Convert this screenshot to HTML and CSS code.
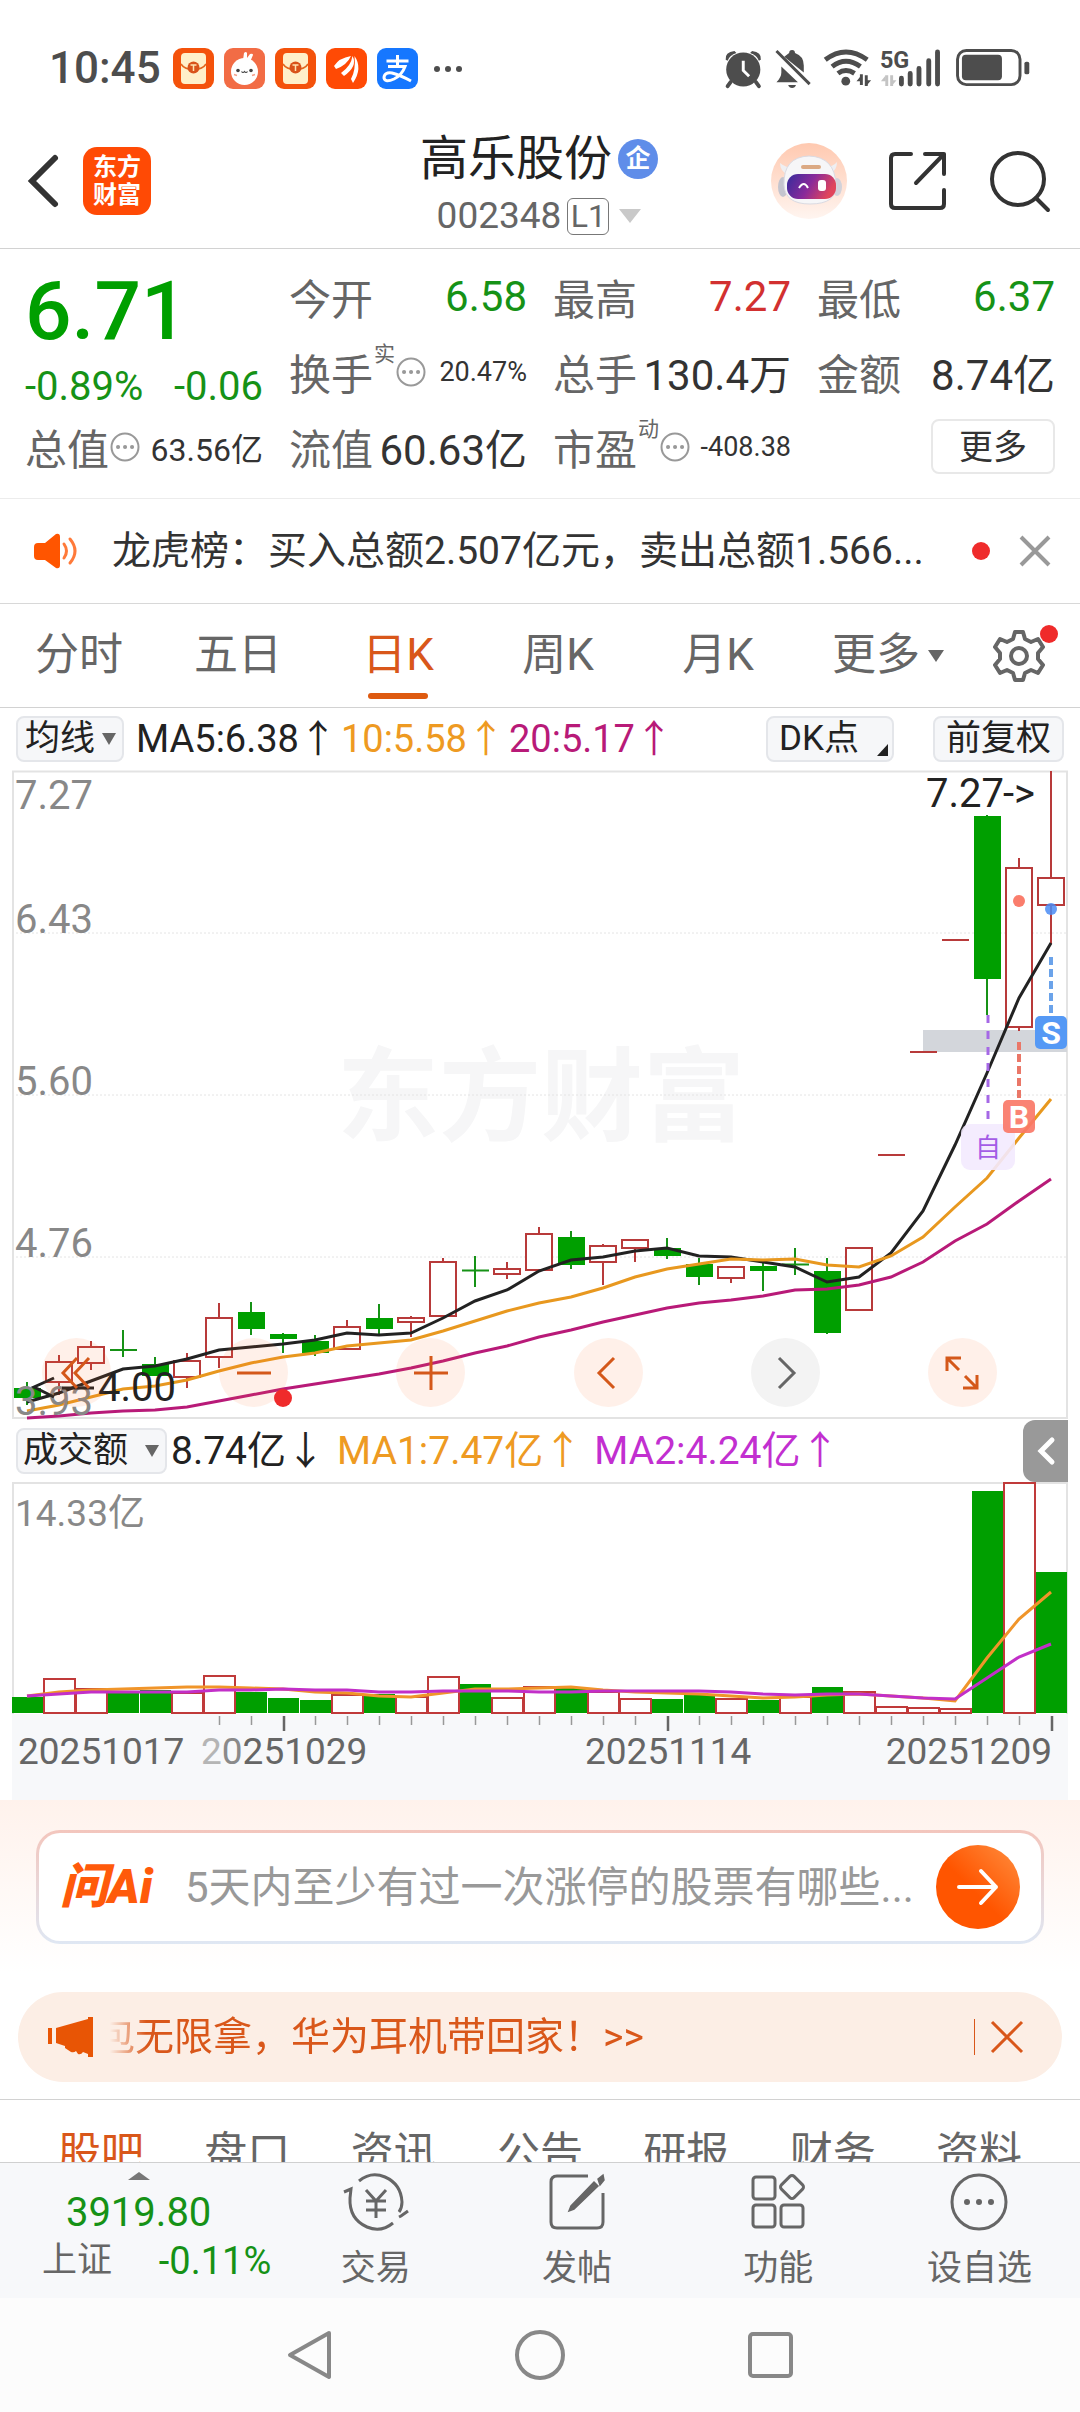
FILE: index.html
```html
<!DOCTYPE html>
<html lang="zh-CN">
<head>
<meta charset="utf-8">
<meta name="viewport" content="width=device-width, initial-scale=1">
<title>高乐股份 002348</title>
<link rel="stylesheet" href="styles.css">
</head>
<body>
<div class="status">
  <span class="clock">10:45</span>
  <div class="status-apps">
    <svg class="app" viewBox="0 0 41 41"><rect width="41" height="41" rx="9" fill="#f4520b"/><rect x="8" y="5" width="25" height="31" rx="4" fill="#fff0c9"/><path d="M8 16Q11 21 20.500 22Q30 21 33 16" fill="none" stroke="#e2661c" stroke-width="1.500"/><circle cx="20.500" cy="19.500" r="6" fill="#d9531a"/><path d="M17.500 17h6M20.500 17v6" stroke="#ffe3b0" stroke-width="1.500"/></svg>
    <svg class="app" viewBox="0 0 41 41"><rect width="41" height="41" rx="9" fill="#f26c45"/><path d="M19 12l1-7q2-2 3 0v5l3-4q3-1 3 1l-3 7z" fill="#fff"/><ellipse cx="20.500" cy="23.500" rx="13.500" ry="13.500" fill="#fff"/><circle cx="14" cy="22.500" r="1.800" fill="#444"/><circle cx="27" cy="22.500" r="1.800" fill="#444"/><path d="M17.500 23.500q1.500 2 3 0q1.500 2 3 0" fill="none" stroke="#444" stroke-width="1.200"/><path d="M10 26.500l3 1M28 27.500l3-1" stroke="#f5a08a" stroke-width="1.500"/></svg>
    <svg class="app" viewBox="0 0 41 41"><rect width="41" height="41" rx="9" fill="#f4520b"/><rect x="8" y="5" width="25" height="31" rx="4" fill="#fff0c9"/><path d="M8 16Q11 21 20.500 22Q30 21 33 16" fill="none" stroke="#e2661c" stroke-width="1.500"/><circle cx="20.500" cy="19.500" r="6" fill="#d9531a"/><path d="M17.500 17h6M20.500 17v6" stroke="#ffe3b0" stroke-width="1.500"/></svg>
    <svg class="app" viewBox="0 0 41 41"><rect width="41" height="41" rx="9" fill="#ff4a05"/><path d="M8 18Q13 10 25 8Q21 17 10 21ZM15 25Q25 18 26.500 8Q32 18 18 28ZM25 31Q30 22 28.500 8Q37 20 27 35Z" fill="#fff"/></svg>
    <svg class="app" viewBox="0 0 41 41"><rect width="41" height="41" rx="9" fill="#1677ff"/><path d="M9.500 13h22M20.500 7v11M11 18.500h17Q25 27 17 31Q8 35 7 30Q7 24 15 25Q23 27 34 33" fill="none" stroke="#fff" stroke-width="3"/></svg>
  </div>
  <svg class="more-dots" viewBox="0 0 30 8" fill="#4d4d4d"><circle cx="4" cy="4" r="3"/><circle cx="15" cy="4" r="3"/><circle cx="26" cy="4" r="3"/></svg>
  <svg class="status-icons" viewBox="0 0 314 42" fill="#4d4d4d">
    <circle cx="20" cy="22" r="17.500"/><path d="M2 12Q1 4 11 3L13 5Q6 7 4 13ZM38 12Q39 4 29 3L27 5Q34 7 36 13Z"/><path d="M7 35l-3 4M33 35l3 4" stroke="#4d4d4d" stroke-width="4" stroke-linecap="round"/><path d="M20 13v10l6 6" fill="none" stroke="#fff" stroke-width="3"/>
    <path d="M54 35q5-5 5-10v-6L76 35ZM62 9l5-4q0-3 3-3t3 3q9 3 9 13v7Z"/><path d="M66 38h8q-1 3-4 3t-4-3Z"/><path d="M54 3L88 37" stroke="#4d4d4d" stroke-width="3"/>
    <g fill="none" stroke="#4d4d4d" stroke-width="5"><path d="M104 12Q125-4 147 12"/><path d="M111 19Q125 8 140 19"/><path d="M117 26Q125 20 134 26"/></g><circle cx="125" cy="34" r="4.500"/><path d="M141 27v11M146 28v11" stroke="#4d4d4d" stroke-width="3"/><path d="M136 34l5-6v6ZM151 33l-5 6v-6Z"/>
    <text x="160" y="20" class="status-5g">5G</text>
    <path d="M167 28v11M172 28v11" stroke="#c4c4c4" stroke-width="3"/><path d="M161 34l5-6v6ZM177 33l-5 6v-6Z" fill="#c4c4c4"/>
    <path d="M182 31v6M191 26v11M200 21v16M210 13v24M219 4v33" stroke="#4d4d4d" stroke-width="5" stroke-linecap="round"/>
    <rect x="239.500" y="2.500" width="64" height="35" rx="9" fill="none" stroke="#4d4d4d" stroke-width="3"/><rect x="244" y="7" width="41" height="26" rx="4"/><rect x="308" y="14" width="5" height="13" rx="2"/>
  </svg>
</div>

<header class="topbar">
  <div class="topbar-left">
    <button class="icon-btn" aria-label="返回"><svg width="32" height="54" viewBox="0 0 32 54" fill="none" stroke="#333" stroke-width="6" stroke-linecap="round"><path d="M28 4L5 27L28 50"/></svg></button>
    <a class="brand" href="#home">东方<br>财富</a>
  </div>
  <div class="title-block">
    <div class="title-row"><h1 class="stock-name">高乐股份</h1><span class="badge">企</span></div>
    <div class="code-row"><span>002348</span><span class="level">L1</span><svg width="22" height="14" viewBox="0 0 22 14"><path d="M0 0H22L11 14Z" fill="#c9c9c9"/></svg></div>
  </div>
  <div class="topbar-right">
    <button class="icon-btn" aria-label="智能助手"><svg width="76" height="76" viewBox="0 0 76 76">
      <defs><linearGradient id="face" x1="0" x2="1" y1="0" y2=".3"><stop offset="0" stop-color="#352c9c"/><stop offset=".55" stop-color="#8a2a9a"/><stop offset="1" stop-color="#e0455c"/></linearGradient><linearGradient id="halo" x1="0" x2="0" y1="0" y2="1"><stop offset="0" stop-color="#ffc9b0"/><stop offset="1" stop-color="#fff5f0"/></linearGradient></defs>
      <circle cx="38" cy="38" r="38" fill="url(#halo)"/><path d="M9 20q0 8 8 12l6-7q-8 0-14-5ZM66 19q0 8-7 12l-5-7q8 0 12-5Z" fill="#efeff2"/><ellipse cx="12" cy="44" rx="5" ry="10" fill="#c4c4ce"/><ellipse cx="66" cy="44" rx="5" ry="9" fill="#d2d2da"/><path d="M13 42Q12 14 38 13Q64 14 65 42Q66 61 39 61Q14 61 13 42Z" fill="#f6f6f8" stroke="#dadae2"/><rect x="16" y="31" width="49" height="25" rx="11" fill="url(#face)"/><rect x="30" y="22" width="20" height="4" rx="2" fill="#dba984"/><path d="M28 45q5-8 9 0" fill="none" stroke="#fff" stroke-width="2"/><rect x="47" y="37" width="8" height="11" rx="3" fill="#fff"/></svg></button>
    <button class="icon-btn" aria-label="分享"><svg width="60" height="60" viewBox="0 0 60 60" fill="none" stroke="#333" stroke-width="4" stroke-linecap="round" stroke-linejoin="round"><path d="M23 3H7Q3 3 3 7V53Q3 57 7 57H52Q56 57 56 53V39M37 3H56V23M56 3L28 32"/></svg></button>
    <button class="icon-btn" aria-label="搜索"><svg width="62" height="62" viewBox="0 0 62 62" fill="none" stroke="#333" stroke-width="4" stroke-linecap="round"><circle cx="29" cy="29" r="26"/><path d="M47 48L59 60"/></svg></button>
  </div>
</header>

<main>
<section class="quote">
  <div class="price-cell">
    <div class="price">6.71</div>
    <div class="change"><span>-0.89%</span><span>-0.06</span></div>
  </div>
  <div class="cell"><span class="label">今开</span><span class="value down">6.58</span></div>
  <div class="cell"><span class="label">最高</span><span class="value up">7.27</span></div>
  <div class="cell"><span class="label">最低</span><span class="value down">6.37</span></div>
  <div class="cell"><span class="label">换手</span><span class="note">实</span><svg class="info" viewBox="0 0 30 30"><circle cx="15" cy="15" r="13.500"/><path d="M8 15h.1M15 15h.1M22 15h.1"/></svg><span class="value small">20.47%</span></div>
  <div class="cell"><span class="label">总手</span><span class="value">130.4万</span></div>
  <div class="cell"><span class="label">金额</span><span class="value">8.74亿</span></div>
  <div class="cell"><span class="label">总值</span><svg class="info" viewBox="0 0 30 30"><circle cx="15" cy="15" r="13.500"/><path d="M8 15h.1M15 15h.1M22 15h.1"/></svg><span class="value medium">63.56亿</span></div>
  <div class="cell"><span class="label">流值</span><span class="value">60.63亿</span></div>
  <div class="cell"><span class="label">市盈</span><span class="note">动</span><svg class="info" viewBox="0 0 30 30"><circle cx="15" cy="15" r="13.500"/><path d="M8 15h.1M15 15h.1M22 15h.1"/></svg><span class="value small">-408.38</span></div>
  <div class="cell"><button class="more-btn">更多</button></div>
</section>

<section class="news">
  <svg class="speaker" width="44" height="36" viewBox="0 0 44 36"><path d="M4 10H11L22 1Q26 0 26 4V32Q26 36 22 35L11 27H4Q0 27 0 23V14Q0 10 4 10Z" fill="#ff5500"/><path d="M30 11Q35 18 30 25M36 6Q46 18 36 30" fill="none" stroke="#ff7a3a" stroke-width="3" stroke-linecap="round"/></svg>
  <a class="news-text" href="#lhb">龙虎榜：买入总额2.507亿元，卖出总额1.566...</a>
  <span class="red-dot"></span>
  <button class="icon-btn" aria-label="关闭"><svg width="30" height="30" viewBox="0 0 30 30" stroke="#999" stroke-width="4"><path d="M1 1L29 29M29 1L1 29"/></svg></button>
</section>

<nav class="periods">
  <button class="period">分时</button>
  <button class="period">五日</button>
  <button class="period active">日K</button>
  <button class="period">周K</button>
  <button class="period">月K</button>
  <button class="period">更多<svg width="16" height="12" viewBox="0 0 16 12"><path d="M0 0H16L8 12Z" fill="#666"/></svg></button>
  <button class="period gear" aria-label="设置"><svg width="54" height="54" viewBox="0 0 54 54" fill="none" stroke="#666" stroke-width="4" stroke-linejoin="round"><path d="M23 3H31L33 10L39 13L46 10L51 18L46 24V30L51 36L46 44L39 41L33 44L31 51H23L21 44L15 41L8 44L3 36L8 30V24L3 18L8 10L15 13L21 10Z"/><circle cx="27" cy="27" r="8"/></svg><span class="red-dot"></span></button>
</nav>

<section class="indicator">
  <span class="drop"><select class="chip" aria-label="主图指标"><option>均线</option></select></span>
  <span class="ma black">MA5:6.38↑</span>
  <span class="ma orange">10:5.58↑</span>
  <span class="ma magenta">20:5.17↑</span>
  <button class="chip dk">DK点<svg width="11" height="12" viewBox="0 0 11 12"><path d="M11 0V12H0Z" fill="#222"/></svg></button>
  <button class="chip">前复权</button>
</section>

<section class="chart">
  <svg class="plot" viewBox="12 770 1056 650" role="img" aria-label="日K线图">
    <text class="watermark" x="541" y="1133" text-anchor="middle">东方财富</text>
    <path d="M12 933H1067M12 1095H1067M12 1257H1067" stroke="#e4e4e4" stroke-width="1" stroke-dasharray="2 2"/>
    <path d="M13 771.500H1067V1418H13Z" fill="none" stroke="#e3e3e3" stroke-width="2"/>
    <rect x="923" y="1030" width="144" height="22" fill="#d3d6db"/>
    <g class="rise">
      <path d="M59 1355V1395M91 1341V1370M187 1353V1388M219 1303V1368M347 1320V1349M411 1316V1337M443 1258V1316M507 1262V1279M539 1227V1270M603 1244V1285M635 1240V1262M731 1267V1283M859 1248V1310M1019 858V1031M1051 771V944"/>
      <path fill="#fff" d="M46 1362h26v20h-26ZM78 1347h26v16h-26ZM174 1361h26v16h-26ZM206 1318h26v39h-26ZM334 1327h26v22h-26ZM398 1318h26v4h-26ZM430 1262h26v54h-26ZM494 1269h26v5h-26ZM526 1234h26v36h-26ZM590 1246h26v16h-26ZM622 1240h26v8h-26ZM718 1267h26v11h-26ZM846 1248h26v62h-26ZM1006 868h26v159h-26ZM1038 878h26v27h-26Z"/>
      <path d="M878 1155h27M910 1052h27M942 940h27"/>
    </g>
    <g class="fall">
      <path d="M27 1382V1405M123 1330V1357M110 1350h27M155 1357V1376M251 1302V1335M283 1333V1353M315 1335V1356M379 1304V1334M475 1256V1287M462 1270.500h27M571 1231V1269M667 1238V1259M699 1258V1285M763 1260V1291M795 1248V1275M782 1264.500h27M827 1258V1334M987 815V1015"/>
      <path class="fall-body" d="M14 1388h27v10h-27ZM142 1364h27v12h-27ZM238 1312h27v17h-27ZM270 1334h27v5h-27ZM302 1341h27v12h-27ZM366 1318h27v11h-27ZM558 1237h27v28h-27ZM654 1248h27v8h-27ZM686 1264h27v13h-27ZM750 1266h27v5h-27ZM814 1271h27v62h-27ZM974 816h27v163h-27Z"/>
    </g>
    <g fill="none" stroke-width="3">
      <polyline stroke="#222" points="27,1402 59,1393 91,1381 123,1369 155,1366 187,1359 219,1350 251,1347 283,1344 315,1340 347,1333 379,1335 411,1333 443,1318 475,1301 507,1290 539,1271 571,1260 603,1257 635,1251 667,1248 699,1256 731,1257 763,1262 795,1267 827,1282 859,1277 891,1253 923,1211 955,1145 987,1073 1019,998 1051,943"/>
      <polyline stroke="#e8981f" points="27,1411 59,1405 91,1397 123,1389 155,1386 187,1380 219,1371 251,1363 283,1357 315,1353 347,1346 379,1343 411,1340 443,1331 475,1321 507,1311 539,1303 571,1297 603,1288 635,1277 667,1269 699,1264 731,1259 763,1260 795,1259 827,1265 859,1267 891,1256 923,1237 955,1207 987,1178 1019,1138 1051,1099"/>
      <polyline stroke="#b81a78" points="27,1418 59,1416 91,1413 123,1411 155,1410 187,1407 219,1401 251,1395 283,1389 315,1384 347,1379 379,1374 411,1368 443,1361 475,1353 507,1346 539,1337 571,1330 603,1322 635,1315 667,1308 699,1303 731,1300 763,1296 795,1290 827,1289 859,1285 891,1277 923,1262 955,1241 987,1224 1019,1201 1051,1179"/>
    </g>
    <g class="axis-label"><text x="15" y="809">7.27</text><text x="15" y="933">6.43</text><text x="15" y="1095">5.60</text><text x="15" y="1257">4.76</text><text x="15" y="1415">3.93</text></g>
    <text class="peak" x="926" y="807">7.27</text><text class="peak" x="1003" y="807">-&gt;</text>
    <path d="M54 1378L34 1387L54 1397M62 1388H94" fill="none" stroke="#222" stroke-width="3"/>
    <text class="peak" x="98" y="1401">4.00</text>
    <circle cx="1019" cy="901" r="6" fill="#fa7d6c"/><circle cx="1051" cy="909" r="6" fill="#4a8cf5" opacity=".85"/>
    <g fill="none" stroke-width="4"><path d="M1051 957V1013" stroke="#6ba3ea" stroke-dasharray="8 4"/><path d="M1019 1042V1098" stroke="#ea7768" stroke-dasharray="8 4"/><path d="M988 1015V1120" stroke="#a568e6" stroke-width="3" stroke-dasharray="8 8"/></g>
    <rect x="961" y="1124" width="54" height="46" rx="9" fill="#f3eafe" opacity=".9"/><text class="mark self" x="988" y="1157">自</text>
    <rect x="1003" y="1100" width="32" height="33" rx="5" fill="#fa7868" opacity=".92"/><text class="mark" x="1019" y="1128">B</text>
    <rect x="1035" y="1016" width="32" height="33" rx="5" fill="#5599f5"/><text class="mark" x="1051" y="1044">S</text>
  </svg>
  <div class="tools">
    <button class="tool" aria-label="更早"><svg viewBox="0 0 34 34"><path d="M17 2L3 17L17 32M29 2L15 17L29 32"/></svg></button>
    <button class="tool" aria-label="缩小"><svg viewBox="0 0 34 34"><path d="M0 17H34"/></svg><span class="red-dot"></span></button>
    <button class="tool" aria-label="放大"><svg viewBox="0 0 34 34"><path d="M0 17H34M17 0V34"/></svg></button>
    <button class="tool" aria-label="前移"><svg viewBox="0 0 34 34"><path d="M23 2L8 17L23 32"/></svg></button>
    <button class="tool muted" aria-label="后移"><svg viewBox="0 0 34 34"><path d="M11 2L26 17L11 32"/></svg></button>
    <button class="tool" aria-label="全屏"><svg viewBox="0 0 34 34"><path d="M16 2H2V15M2 2L14 14M18 32H32V19M32 32L20 20"/></svg></button>
  </div>
</section>

<section class="indicator volume-head">
  <span class="drop wide"><select class="chip" aria-label="副图指标"><option>成交额</option></select></span>
  <span class="ma black">8.74亿↓</span>
  <span class="ma orange">MA1:7.47亿↑</span>
  <span class="ma violet">MA2:4.24亿↑</span>
  <button class="handle" aria-label="展开"><svg width="18" height="28" viewBox="0 0 18 28" fill="none" stroke="#fff" stroke-width="5" stroke-linecap="round"><path d="M15 3L4 14L15 25"/></svg></button>
</section>

<section class="chart">
  <svg class="plot" viewBox="12 1482 1056 318" role="img" aria-label="成交额">
    <rect x="12" y="1714" width="1056" height="86" fill="#f7f8fa"/>
    <path d="M13 1714V1483H1067V1714" fill="none" stroke="#e3e3e3" stroke-width="2"/>
    <path class="fall-body" d="M12 1697h31v16h-31ZM108 1692h31v21h-31ZM140 1690h31v23h-31ZM236 1692h31v21h-31ZM268 1698h31v15h-31ZM300 1700h31v13h-31ZM364 1694h31v19h-31ZM460 1684h31v29h-31ZM556 1688h31v25h-31ZM652 1699h31v14h-31ZM684 1695h31v18h-31ZM748 1700h31v13h-31ZM812 1687h31v26h-31ZM972 1491h31v222h-31ZM1036 1572h31v141h-31Z"/>
    <path fill="#fff" stroke="#c03a3a" stroke-width="2" d="M44 1713V1679h31V1713ZM76 1713V1689h31V1713ZM172 1713V1693h31V1713ZM204 1713V1676h31V1713ZM332 1713V1695h31V1713ZM396 1713V1697h31V1713ZM428 1713V1677h31V1713ZM492 1713V1698h31V1713ZM524 1713V1687h31V1713ZM588 1713V1692h31V1713ZM620 1713V1699h31V1713ZM716 1713V1699h31V1713ZM780 1713V1697h31V1713ZM844 1713V1692h31V1713ZM876 1713V1707h31V1713ZM908 1713V1708h31V1713ZM940 1713V1709h31V1713ZM1004 1713V1483h31V1713Z"/>
    <g fill="none" stroke-width="3">
      <polyline stroke="#f0952a" points="27,1696 59,1692 91,1690 123,1689 155,1688 187,1687 219,1687 251,1688 283,1689 315,1692 347,1693 379,1696 411,1697 443,1693 475,1689 507,1689 539,1688 571,1687 603,1690 635,1692 667,1693 699,1694 731,1696 763,1698 795,1697 827,1695 859,1694 891,1696 923,1698 955,1701 987,1658 1019,1619 1051,1592"/>
      <polyline stroke="#c22fc8" points="27,1696 59,1694 91,1692 123,1692 155,1692 187,1692 219,1690 251,1690 283,1689 315,1690 347,1690 379,1692 411,1692 443,1691 475,1691 507,1691 539,1692 571,1692 603,1691 635,1691 667,1691 699,1691 731,1692 763,1694 795,1695 827,1694 859,1694 891,1696 923,1698 955,1699 987,1678 1019,1657 1051,1644"/>
    </g>
    <path stroke="#999" stroke-width="1.500" d="M219.500 1716v9M251.500 1716v9M315.500 1716v9M347.500 1716v9M379.500 1716v9M411.500 1716v9M443.500 1716v9M475.500 1716v9M507.500 1716v9M539.500 1716v9M571.500 1716v9M603.500 1716v9M635.500 1716v9M699.500 1716v9M731.500 1716v9M763.500 1716v9M795.500 1716v9M827.500 1716v9M859.500 1716v9M891.500 1716v9M923.500 1716v9M955.500 1716v9M987.500 1716v9M1019.500 1716v9"/>
    <path stroke="#666" stroke-width="2.500" d="M284 1716v15M668 1716v15M1052 1716v15"/>
    <text class="axis-label volume-max" x="15" y="1526">14.33亿</text>
    <g class="dates"><text x="18" y="1764">20251017</text><text x="201" y="1764"><tspan fill="#b5b5b5">2</tspan><tspan fill="#8a8a8a">0</tspan>251029</text><text x="585" y="1764">20251114</text><text x="1052" y="1764" text-anchor="end">20251209</text></g>
  </svg>
</section>

<section class="ask">
  <form class="ask-box">
    <label class="ask-logo" for="ask">问Ai</label>
    <input class="ask-input" id="ask" type="text" placeholder="5天内至少有过一次涨停的股票有哪些...">
    <button class="ask-send" type="button" aria-label="提问"><svg width="42" height="36" viewBox="0 0 42 36" fill="none" stroke="#fff" stroke-width="4" stroke-linecap="round" stroke-linejoin="round"><path d="M2 18H39M24 2L39 18L24 34"/></svg></button>
  </form>
</section>

<section class="promo">
  <svg width="46" height="40" viewBox="0 0 46 40" fill="#e85505"><path d="M0 11H4V27H0ZM8 11L40 2V0H45V40H40V37L35 35Q33 38 30 37L28 34Q26 36 23 35L17 31V29L8 26Z"/></svg>
  <a class="promo-text" href="#promo"><span>包无限拿，华为耳机带回家！&gt;&gt;</span></a>
  <span class="promo-line"></span>
  <button class="icon-btn" aria-label="关闭"><svg width="32" height="32" viewBox="0 0 32 32" stroke="#d9571a" stroke-width="3"><path d="M1 1L31 31M31 1L1 31"/></svg></button>
</section>

<nav class="sections">
  <a class="section active" href="#guba">股吧</a><a class="section" href="#pankou">盘口</a><a class="section" href="#news">资讯</a><a class="section" href="#notice">公告</a><a class="section" href="#report">研报</a><a class="section" href="#finance">财务</a><a class="section" href="#profile">资料</a>
</nav>
</main>

<footer class="bottombar">
  <a class="index" href="#index">
    <svg width="22" height="8" viewBox="0 0 22 8"><path d="M0 8L11 0L22 8Z" fill="#777"/></svg>
    <span class="index-value">3919.80</span>
    <span class="index-row"><span class="index-name">上证</span><span class="index-change">-0.11%</span></span>
  </a>
  <a class="action" href="#trade"><svg width="66" height="58" viewBox="0 0 66 58" fill="none" stroke="#666" stroke-width="3"><path d="M16 8Q28-2 42 4Q58 11 59 29Q59 35 56 39M50 50Q38 60 24 54Q6 46 7 25L8 16L1 19M56 44L58 43L65 38"/><path d="M23 17L33 28L43 17M23 28H43M23 37H43M33 28V45"/></svg>交易</a>
  <a class="action" href="#post"><svg width="56" height="58" viewBox="0 0 56 58" fill="none" stroke="#666" stroke-width="3"><path d="M39 3H8Q2 3 2 9V49Q2 55 8 55H48Q54 55 54 49V20"/><path d="M49 6L54 2L55 7L51 12ZM45 9L49 13L25 36L20 38L22 33Z" fill="#666" stroke-width="1.500"/></svg>发帖</a>
  <a class="action" href="#features"><svg width="54" height="58" viewBox="0 0 54 58" fill="none" stroke="#666" stroke-width="3"><rect x="2" y="4" width="22" height="22" rx="3"/><rect x="2" y="32" width="22" height="22" rx="3"/><rect x="30" y="32" width="22" height="22" rx="3"/><rect x="32" y="5" width="18" height="18" rx="3" transform="rotate(45 41 14)"/></svg>功能</a>
  <a class="action" href="#watch"><svg width="58" height="58" viewBox="0 0 58 58"><circle cx="29" cy="29" r="27" fill="none" stroke="#666" stroke-width="3"/><g fill="#666"><circle cx="17" cy="29" r="3"/><circle cx="29" cy="29" r="3"/><circle cx="41" cy="29" r="3"/></g></svg>设自选</a>
</footer>
<div class="sysnav">
  <button class="icon-btn" aria-label="后退"><svg width="50" height="50" viewBox="0 0 50 50" fill="none" stroke="#888" stroke-width="4" stroke-linejoin="round"><path d="M44 3L5 25L44 47Z"/></svg></button>
  <button class="icon-btn" aria-label="主屏"><svg width="50" height="50" viewBox="0 0 50 50" fill="none" stroke="#888" stroke-width="4"><circle cx="25" cy="25" r="23"/></svg></button>
  <button class="icon-btn" aria-label="任务"><svg width="50" height="50" viewBox="0 0 50 50" fill="none" stroke="#888" stroke-width="4"><rect x="5" y="4" width="41" height="42" rx="3"/></svg></button>
</div>
</body>
</html>
```
FILE: styles.css
```css
* { box-sizing: border-box; }
body { margin: 0; background: #fff; color: #333; font-family: Roboto, "Noto Sans CJK SC", sans-serif; }
button, select, input { font: inherit; color: inherit; margin: 0; padding: 0; border: 0; background: none; }
a { color: inherit; text-decoration: none; }
svg { display: block; flex: none; overflow: visible; }
.icon-btn { display: flex; flex: none; }
.red-dot { flex: none; width: 18px; height: 18px; border-radius: 50%; background: #ef2b2b; }

/* system status bar */
.status { display: flex; align-items: center; padding: 48px 46px 41px 49px; color: #4d4d4d; }
.clock { font-size: 44px; line-height: 41px; font-weight: 500; }
.status-apps { display: flex; gap: 10px; margin-left: 12px; }
.app { width: 41px; height: 41px; }
.more-dots { width: 30px; height: 8px; margin-left: 15px; }
.status-icons { width: 314px; height: 41px; margin-left: auto; }
.status-5g { font-size: 24px; font-weight: 700; }

/* stock header */
.topbar { display: grid; grid-template-columns: 1fr auto 1fr; align-items: center; padding: 0 29px 12px 27px; border-bottom: 1px solid #d2d2d2; }
.topbar-left { display: flex; align-items: center; gap: 24px; padding-bottom: 4px; }
.brand { width: 68px; height: 68px; padding-top: 6px; border-radius: 14px; background: #ff4a05; color: #fff; font-size: 24px; line-height: 28px; font-weight: 700; text-align: center; }
.title-block { display: flex; flex-direction: column; align-items: center; gap: 8px; }
.title-row { display: flex; align-items: center; gap: 6px; }
.stock-name { margin: 0; font-size: 48px; line-height: 58px; font-weight: 400; color: #222; }
.badge { width: 40px; height: 40px; border-radius: 50%; background: #5f8de9; color: #fff; font-size: 25px; line-height: 40px; font-weight: 700; text-align: center; }
.code-row { display: flex; align-items: center; gap: 6px; font-size: 37px; line-height: 40px; color: #666; }
.level { width: 42px; height: 37px; border: 1px solid #777; border-radius: 6px; font-size: 32px; line-height: 35px; text-align: center; margin-right: 4px; }
.topbar-right { display: flex; align-items: center; justify-content: flex-end; gap: 41px; padding-bottom: 4px; }

/* quote grid */
.quote { display: grid; grid-template-columns: repeat(4, 1fr); grid-auto-rows: 75px; column-gap: 26px; padding: 10px 25px 14px; border-bottom: 1px solid #ececec; }
.price-cell { grid-row: span 2; padding-top: 12px; color: #009f00; }
.price { font-size: 82px; line-height: 80px; font-weight: 500; }
.change { display: flex; justify-content: space-between; margin-top: 16px; font-size: 40px; line-height: 40px; color: #169216; }
.cell { display: flex; align-items: center; gap: 1px; white-space: nowrap; }
.label { font-size: 42px; color: #666; }
.note { align-self: flex-start; margin-top: 10px; font-size: 21px; line-height: 21px; color: #666; }
.info { width: 30px; height: 30px; fill: none; stroke: #999; stroke-width: 2; }
.info path { stroke-width: 4; stroke-linecap: round; }
.value { margin-left: auto; font-size: 42px; }
.medium { font-size: 32px; }
.small { font-size: 27px; }
.up { color: #d23030; }
.down { color: #169216; }
.more-btn { width: 124px; height: 55px; margin-left: auto; border: 2px solid #e8e8e8; border-radius: 8px; font-size: 34px; line-height: 50px; }

/* news line */
.news { display: flex; align-items: center; padding: 25px 30px 25px 34px; border-bottom: 1px solid #d8d8d8; }
.news-text { flex: 1; margin-left: 34px; overflow: hidden; white-space: nowrap; font-size: 39px; line-height: 54px; }
.news .icon-btn { margin-left: 30px; }

/* period tabs */
.periods { display: grid; grid-template-columns: 158fr 160fr 160fr 160fr 160fr 180fr 102fr; border-bottom: 1px solid #d2d2d2; }
.period { position: relative; display: flex; align-items: center; justify-content: center; gap: 8px; padding: 24px 0; font-size: 44px; line-height: 55px; color: #666; }
.period.active { color: #d9571a; }
.period.active::after { content: ""; position: absolute; bottom: 8px; width: 60px; height: 6px; border-radius: 3px; background: #de5a10; }
.gear { padding-right: 20px; }
.gear .red-dot { position: absolute; top: 21px; right: 22px; }

/* indicator rows */
.indicator { display: flex; align-items: center; gap: 4px; padding: 8px 16px; white-space: nowrap; font-size: 38px; line-height: 46px; }
.chip { height: 46px; padding: 0 11px; border: 2px solid #e4e6ea; border-radius: 8px; background: #f6f7f9; color: #222; font-size: 35px; line-height: 42px; }
.drop { position: relative; width: 108px; margin-right: 8px; }
.drop .chip { display: block; width: 100%; padding: 0 0 0 7px; appearance: none; }
.drop::after { content: ""; position: absolute; right: 8px; top: 17px; border: 7px solid transparent; border-top: 12px solid #666; border-bottom: 0; }
.black { color: #222; }
.orange { color: #ee9a22; }
.magenta { color: #b81a78; }
.violet { color: #c22fd0; }
.dk { position: relative; width: 128px; margin: 0 35px 0 auto; text-align: left; }
.dk svg { position: absolute; right: 4px; bottom: 4px; }
.volume-head { gap: 12px; padding-right: 12px; font-size: 39px; }
.drop.wide { width: 151px; margin-right: -8px; }
.drop.wide .chip { padding-left: 5px; }
.handle { display: flex; align-items: center; justify-content: center; width: 45px; height: 62px; margin: -8px 0 -8px auto; border-radius: 12px 0 0 12px; background: #999; }

/* charts */
.chart { position: relative; margin: 0 12px; }
.plot { width: 100%; height: auto; }
.watermark { font-size: 102px; font-weight: 700; fill: #f6f6f7; }
.rise { fill: none; stroke: #b83a3a; stroke-width: 2; }
.fall { fill: none; stroke: #169216; stroke-width: 2; }
.fall-body { fill: #009f00; stroke: none; }
.axis-label { font-size: 40px; fill: #888; }
.volume-max { font-size: 37px; }
.peak { font-size: 40px; fill: #222; }
.dates { font-size: 37px; fill: #666; }
.mark { font-size: 32px; font-weight: 700; fill: #fff; text-anchor: middle; }
.self { font-size: 26px; font-weight: 400; fill: #a45ce6; }
.tools { position: absolute; left: 30px; right: 71px; bottom: 13px; display: flex; justify-content: space-between; }
.tool { position: relative; display: flex; align-items: center; justify-content: center; width: 69px; height: 69px; border-radius: 50%; background: rgba(255, 110, 40, .1); }
.tool svg { width: 34px; height: 34px; fill: none; stroke: #d4581a; stroke-width: 3; }
.tool.muted { background: #f3f3f3; }
.tool.muted svg { stroke: #666; }
.tool .red-dot { position: absolute; right: -4px; bottom: 0; }

/* ask box */
.ask { padding: 30px 36px 48px; background: linear-gradient(#fff2ec, #fff 90%); }
.ask-box { display: flex; align-items: center; height: 114px; padding: 0 21px; border: 3px solid transparent; border-radius: 24px; background: linear-gradient(#fff, #fff) padding-box, linear-gradient(#f3c6bd, #dfe7f3) border-box; }
.ask-logo { width: 125px; font-size: 48px; line-height: 54px; font-weight: 900; font-style: italic; color: #ff5a0a; }
.ask-input { flex: 1; min-width: 0; font-size: 42px; line-height: 54px; height: 60px; }
.ask-input::placeholder { color: #999; opacity: 1; }
.ask-send { display: flex; flex: none; align-items: center; justify-content: center; width: 84px; height: 84px; border-radius: 50%; background: linear-gradient(45deg, #ff5500 45%, #ff8f40); }

/* promo line */
.promo { display: flex; align-items: center; margin: 0 18px 17px; padding: 18px 39px 18px 30px; border-radius: 45px; background: #fceee5; color: #d9571a; }
.promo-text { display: flex; justify-content: flex-start; flex: 1; margin-left: 16px; overflow: hidden; white-space: nowrap; font-size: 39px; line-height: 54px; -webkit-mask-image: linear-gradient(90deg, transparent, #000 36px); mask-image: linear-gradient(90deg, transparent, #000 36px); }
.promo-text span { margin-left: -14px; }
.promo-line { width: 1px; height: 36px; margin-right: 16px; background: #d9571a; }

/* section tabs, cut off by the bottom bar */
.sections { display: flex; justify-content: space-between; height: 63px; overflow: hidden; padding: 30px 58px 0; border-top: 1px solid #d2d2d2; font-size: 43px; line-height: 46px; color: #666; }
.section.active { color: #d9571a; }

/* bottom bar */
.bottombar { display: grid; grid-template-columns: 275fr repeat(4, 201fr); border-top: 1px solid #d0d0d0; background: #f7f8fa; color: #666; }
.index { display: flex; flex-direction: column; align-items: center; padding: 9px 4px 0 42px; color: #169216; }
.index > svg, .index-value { margin-right: 36px; }
.index-value { margin-top: 11px; font-size: 40px; line-height: 44px; }
.index-row { display: flex; align-self: stretch; justify-content: space-between; margin-top: 6px; font-size: 38px; line-height: 40px; }
.index-name { font-size: 35px; color: #666; }
.action { display: flex; flex-direction: column; align-items: center; gap: 16px; padding: 10px 0 7px; font-size: 35px; line-height: 44px; }

/* system navigation */
.sysnav { display: flex; justify-content: center; gap: 180px; padding: 32px 0; background: #fcfcfc; }
```
